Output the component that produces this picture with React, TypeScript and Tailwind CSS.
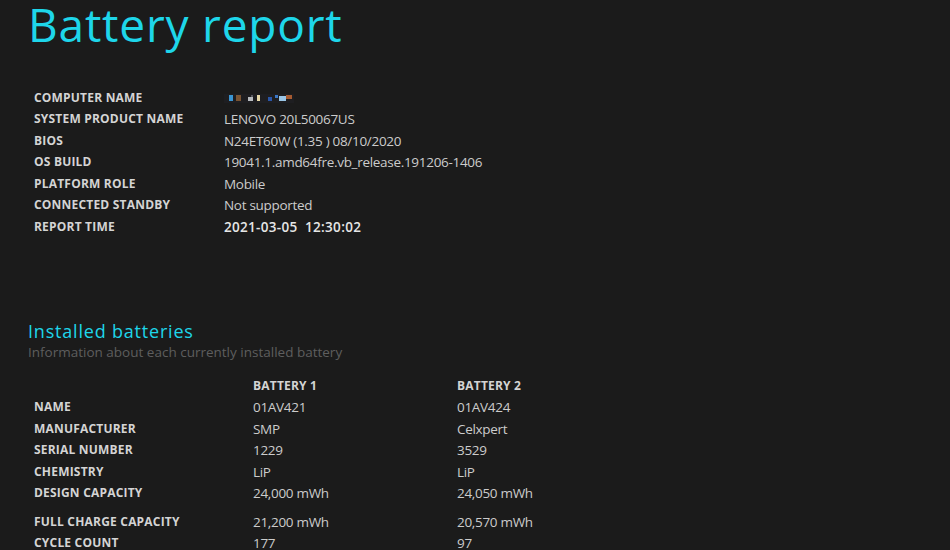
import React from "react";

const sys: [string, React.ReactNode][] = [
  ["COMPUTER NAME", "__blur__"],
  ["SYSTEM PRODUCT NAME", "LENOVO 20L50067US"],
  ["BIOS", "N24ET60W (1.35 ) 08/10/2020"],
  ["OS BUILD", "19041.1.amd64fre.vb_release.191206-1406"],
  ["PLATFORM ROLE", "Mobile"],
  ["CONNECTED STANDBY", "Not supported"],
  ["REPORT TIME", "__time__"],
];

const bat: [string, string, string][] = [
  ["NAME", "01AV421", "01AV424"],
  ["MANUFACTURER", "SMP", "Celxpert"],
  ["SERIAL NUMBER", "1229", "3529"],
  ["CHEMISTRY", "LiP", "LiP"],
  ["DESIGN CAPACITY", "24,000 mWh", "24,050 mWh"],
];
const bat2: [string, string, string][] = [
  ["FULL CHARGE CAPACITY", "21,200 mWh", "20,570 mWh"],
  ["CYCLE COUNT", "177", "97"],
];

function Blur() {
  return (
    <svg width="70" height="10" viewBox="0 0 70 10" className="block">
      <rect x="0" y="1" width="70" height="9" fill="#1e1e21" />
      <rect x="5" y="2" width="4" height="6" fill="#3a95d2" />
      <rect x="12" y="2" width="5" height="6" fill="#7a5432" />
      <rect x="24" y="4" width="5" height="4" fill="#b8bcc0" />
      <rect x="27" y="2" width="2" height="2" fill="#5a5a60" />
      <rect x="33" y="2" width="3" height="6" fill="#e6d8a8" />
      <rect x="44" y="4" width="4" height="4" fill="#2a56a8" />
      <rect x="51" y="2" width="3" height="3" fill="#3a78c8" />
      <rect x="55" y="3" width="7" height="5" fill="#9ac6e6" />
      <rect x="62" y="2" width="6" height="4" fill="#a65a30" />
    </svg>
  );
}

const label = "h-[21.5px] flex items-center text-[12px] tracking-[0.2px] font-bold text-[#d4d4d4] whitespace-nowrap";
const val = "h-[21.5px] flex items-center text-[13.5px] tracking-[-0.3px] text-[#cccccc] whitespace-nowrap";

export default function App() {
  return (
    <div
      className="w-full h-[550px] overflow-hidden bg-[#1b1b1b] text-[#cfcfcf]"
      style={{ fontFamily: '"Open Sans", "Noto Sans", sans-serif' }}
    >
      <h1 className="pl-[28px] text-[46px] leading-[48px] tracking-[0.8px] font-normal text-[#1ed6ea] whitespace-nowrap">
        Battery report
      </h1>

      <div className="mt-[39px] pl-[34px] grid grid-cols-[190px_1fr]">
        {sys.map(([k, v]) => (
          <React.Fragment key={k}>
            <div className={label}>{k}</div>
            <div className={val}>
              {v === "__blur__" ? (
                <Blur />
              ) : v === "__time__" ? (
                <span className="font-semibold tracking-[0.3px] text-[#e6e6e6] whitespace-pre">2021-03-05  12:30:02</span>
              ) : (
                v
              )}
            </div>
          </React.Fragment>
        ))}
      </div>

      <div className="mt-[82px] pl-[28px]">
        <h2 className="text-[18px] leading-[22px] tracking-[0.8px] text-[#1ed6ea]">Installed batteries</h2>
        <p className="text-[13.5px] leading-[20px] text-[#5e5e5e]">
          Information about each currently installed battery
        </p>
      </div>

      <div className="mt-[13.5px] pl-[34px] grid grid-cols-[219px_204px_1fr]">
        <div className="h-[21.5px]" />
        <div className={label}>BATTERY 1</div>
        <div className={label}>BATTERY 2</div>
        {bat.map(([k, a, b]) => (
          <React.Fragment key={k}>
            <div className={label}>{k}</div>
            <div className={val}>{a}</div>
            <div className={val}>{b}</div>
          </React.Fragment>
        ))}
      </div>
      <div className="mt-[7px] pl-[34px] grid grid-cols-[219px_204px_1fr]">
        {bat2.map(([k, a, b]) => (
          <React.Fragment key={k}>
            <div className={label}>{k}</div>
            <div className={val}>{a}</div>
            <div className={val}>{b}</div>
          </React.Fragment>
        ))}
      </div>
    </div>
  );
}
